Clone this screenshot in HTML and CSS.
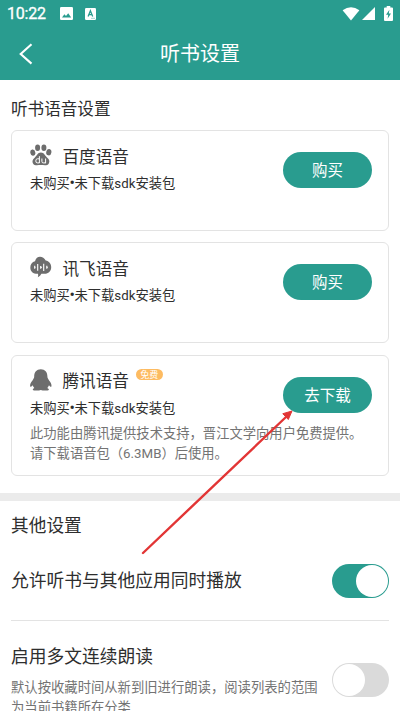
FILE: index.html
```html
<!DOCTYPE html>
<html lang="zh-CN">
<head>
<meta charset="utf-8">
<title>听书设置</title>
<link rel="stylesheet" href="styles.css">
</head>
<body>
<div class="screen">
  <header class="header">
    <div class="status">
      <span class="time">10:22</span>
      <svg class="s-img" width="13" height="13" viewBox="0 0 13 13"><rect width="13" height="13" rx="1.3" fill="#fff"/><path d="M2 10.4 4.4 7.2 6 9.1 8.2 6.2 11.2 10.4z" fill="#299c8f"/></svg>
      <svg class="s-a" width="11" height="12" viewBox="0 0 11 12"><rect width="11" height="12" rx="1.2" fill="#fff"/><path d="M3.1 8.5 5.4 2.8 7.7 8.5M4 6.7H6.8" fill="none" stroke="#299c8f" stroke-width="1.3"/><path d="M6 10.3H10" stroke="#8ccac3" stroke-width=".8"/></svg>
      <span class="grow"></span>
      <svg class="s-wifi" width="18" height="14" viewBox="0 0 18 14"><path d="M.6 3.2Q9-2.8 17.4 3.2L9 13.6z" fill="#fff"/></svg>
      <svg class="s-cell" width="13" height="13" viewBox="0 0 13 13"><path d="M13 0V13H0z" fill="#fff"/></svg>
      <svg class="s-bat" width="9" height="15" viewBox="0 0 9 15"><path d="M2.7 0H6.3V1.5H8Q9 1.5 9 2.5V14Q9 15 8 15H1Q0 15 0 14V2.5Q0 1.5 1 1.5H2.7z" fill="#fff"/><path d="M5.4 3.8 2 8.7H4.2L3.6 12.7 7 7.6H4.8z" fill="#299c8f"/></svg>
    </div>
    <div class="nav">
      <svg class="back" width="14" height="22" viewBox="0 0 14 22"><path d="M12.5 1.2 1.7 11 12.5 20.6" fill="none" stroke="#fff" stroke-width="2.1"/></svg>
      <h1>听书设置</h1>
    </div>
  </header>

  <section class="voices">
    <h2>听书语音设置</h2>
    <article class="card">
      <div class="info">
        <div class="name">
          <svg width="22" height="22" viewBox="0 0 22 22" fill="#6d6d6d"><ellipse cx="2.8" cy="8.6" rx="2.5" ry="3.1" transform="rotate(-10 2.8 8.6)"/><ellipse cx="7.6" cy="3.7" rx="2.5" ry="3.3"/><ellipse cx="13.9" cy="3.7" rx="2.5" ry="3.3"/><ellipse cx="18.8" cy="8.2" rx="2.6" ry="3.2" transform="rotate(10 18.8 8.2)"/><path d="M10.9 8.5C14.3 8.5 14.6 11.4 17 13.4C19.6 15.5 19.8 17.4 18.8 19.4C17.4 22 14 21 10.9 21S4.5 22 3 19.4C1.9 17.3 2.5 15.3 4.9 13.4C7.3 11.4 7.5 8.5 10.9 8.5z"/><path d="M9.4 12.2V19M9.4 14.8H7.4Q5.8 14.8 5.8 16.9T7.4 18.9H9.4M11.9 14.5V17.4Q11.9 18.9 13.2 18.9H15.6M15.6 14.5V19.2" fill="none" stroke="#fff" stroke-width="1"/></svg>
          <h3>百度语音</h3>
        </div>
        <p class="state">未购买<i>•</i>未下载sdk安装包</p>
      </div>
      <button class="btn">购买</button>
    </article>
    <article class="card">
      <div class="info">
        <div class="name">
          <svg width="22" height="22" viewBox="0 0 22 22"><path d="M5 5.2C5.8 2.2 7.8.8 10 .8S14.6 2.3 15.7 4.6C19 5 21.2 8 21.2 11.2C21.2 15.3 18.3 17.7 14.8 17.7H11.4Q10.5 19.8 7.8 21.2Q8.5 19 8 17.8C3.4 18 .3 15.4.3 11.4C.3 8.2 2.1 6 5 5.2z" fill="#6d6d6d"/><path d="M4.7 9.8V12.8M7.7 8V14.8M10.7 9.9V12.8M13.7 7.8V15M16.8 9.8V12.8" stroke="#fff" stroke-width="1.1" fill="none"/><path d="M4.7 11.3H5.5M10.7 11.3H12M16.8 11.3H17.8" stroke="#fff"/></svg>
          <h3>讯飞语音</h3>
        </div>
        <p class="state">未购买<i>•</i>未下载sdk安装包</p>
      </div>
      <button class="btn">购买</button>
    </article>
    <article class="card tall">
      <div class="info">
        <div class="name">
          <svg width="22" height="22" viewBox="0 0 22 22"><path d="M10.8.3C6.6.3 4.2 3.4 4.2 7.4C4.2 9.2 3.2 9.7 2.5 11.5C.8 13.4-.2 15.7.2 17.4C.5 18.4 1.9 17.4 2.6 16.3Q3 17.7 4.3 18.9C2 20 2.3 21.5 5.2 21.5Q9 21.7 10.8 20.9Q12.7 21.7 16.5 21.5C19.4 21.5 19.6 20 17.3 18.9Q18.6 17.7 19 16.3C19.7 17.4 21 18.4 21.4 17.4C21.8 15.7 20.8 13.4 19.1 11.5C18.4 9.7 17.4 9.2 17.4 7.4C17.4 3.4 15 .3 10.8.3z" fill="#6d6d6d"/></svg>
          <h3>腾讯语音</h3>
          <span class="free">免费</span>
        </div>
        <p class="state">未购买<i>•</i>未下载sdk安装包</p>
        <p class="desc">此功能由腾讯提供技术支持，晋江文学向用户免费提供。<br>请下载语音包（6.3MB）后使用。</p>
      </div>
      <button class="btn">去下载</button>
    </article>
  </section>

  <section class="others">
    <h2>其他设置</h2>
    <div class="row">
      <h3>允许听书与其他应用同时播放</h3>
      <span class="toggle on"></span>
    </div>
    <div class="row multi">
      <div>
        <h3>启用多文连续朗读</h3>
        <p>默认按收藏时间从新到旧进行朗读，阅读列表的范围<br>为当前书籍所在分类</p>
      </div>
      <span class="toggle"></span>
    </div>
  </section>

  <svg class="arrow" width="152" height="146" viewBox="0 0 152 146"><path d="M2 144 145 8" stroke="#e23535" stroke-width="2.4" stroke-linecap="round"/><path d="M151 2 147.3 10.5 141.8 4.7z" fill="#e23535" stroke="#e23535" stroke-width="1" stroke-linejoin="round"/></svg>
</div>
</body>
</html>
```
FILE: styles.css
```css
* { box-sizing: border-box; margin: 0; padding: 0; }
html, body { overflow: hidden; }
body { font-family: Roboto, "Noto Sans CJK SC", sans-serif; color: #2e2e2e; background: #fff; }
h1, h2, h3 { font-weight: 400; white-space: nowrap; }
svg { display: block; flex: none; }
.screen { position: relative; width: 400px; height: 711px; overflow: hidden; }

.header { height: 80px; background: #299c8f; color: #fff; }
.status { height: 27px; display: flex; align-items: center; padding: 0 7px; }
.time { font-size: 16px; line-height: 28px; width: 53px; letter-spacing: -.2px; -webkit-text-stroke: .3px; }
.s-img { margin-right: 12px; }
.grow { flex: 1; }
.s-wifi { margin-right: 2px; }
.s-cell { margin-right: 9px; }
.nav { height: 53px; display: flex; align-items: center; padding-left: 19px; }
.back { margin-right: 127px; }
h1 { font-size: 20px; line-height: 51px; padding-top: 2px; }

.voices { height: 413px; padding: 17px 11px 0; }
.voices h2 { font-size: 16.6px; line-height: 26px; margin-bottom: 7px; }
.card { display: flex; height: 101px; margin-bottom: 11px; border: 1px solid #e3e3e3; border-radius: 6px; padding: 13px 16px 0 18px; }
.card:nth-of-type(2) { margin-bottom: 12px; }
.card.tall { height: 121px; }
.info { width: 253px; flex: none; }
.name { display: flex; height: 25px; }
.name h3 { font-size: 16.6px; line-height: 25px; margin-left: 10.5px; padding-top: 1px; }
.tall h3 { padding-top: 0; }
.free { width: 27px; height: 11px; margin: 0 0 0 7px; border-radius: 6px; background: #fdbb61; color: #fff; font-size: 9px; line-height: 12px; text-align: center; }
.state { font-size: 13.3px; line-height: 20px; margin-top: 5px; white-space: nowrap; }
.state i { display: inline-flex; justify-content: center; width: 4.5px; font-style: normal; font-size: 16px; line-height: 10px; }
.desc { font-size: 13.3px; line-height: 20px; margin-top: 5px; color: #737373; white-space: nowrap; }
.btn { width: 89px; height: 36px; margin-top: 8px; padding-top: 2px; border: 0; border-radius: 18px; background: #299c8f; color: #fff; font: 15.5px/34px Roboto, "Noto Sans CJK SC", sans-serif; }

.others { border-top: 8px solid #ebebeb; }
.others h2 { font-size: 17.7px; line-height: 26px; padding: 12px 11px 0; }
.row { display: flex; justify-content: space-between; align-items: center; height: 82px; margin: 0 11px; border-bottom: 1px solid #e3e3e3; padding-top: 2px; }
.row h3 { font-size: 17.75px; line-height: 26px; padding-top: 1px; }
.row p { font-size: 13.33px; line-height: 20px; color: #737373; white-space: nowrap; }
.multi { height: 118px; border: 0; padding-top: 0; }
.multi h3 { margin-bottom: 8px; padding-top: 2px; }
.toggle { width: 57px; height: 34px; flex: none; border-radius: 17px; background: #dadada; padding: 1px; display: flex; }
.toggle::before { content: ""; width: 32px; height: 32px; border-radius: 50%; background: #fff; }
.toggle.on { background: #299c8f; justify-content: flex-end; }
.arrow { position: absolute; left: 141px; top: 409px; }
```
